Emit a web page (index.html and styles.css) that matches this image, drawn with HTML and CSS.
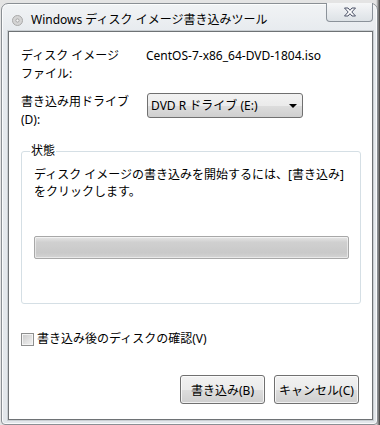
FILE: index.html
```html
<!DOCTYPE html>
<html lang="ja">
<head>
    <meta charset="UTF-8">
    <title>Windows ディスク イメージ書き込みツール</title>
    <link rel="stylesheet" href="styles.css">
</head>
<body>
    <div class="window">
        <div class="titlebar">
            <svg class="app-icon" width="11" height="11" viewBox="0 0 11 11">
                <circle cx="5.5" cy="5.5" r="5" fill="#d4d4d4" stroke="#a9a9a9"/>
                <circle cx="5.5" cy="5.5" r="1.6" fill="#f4f4f4" stroke="#9a9a9a" stroke-width="0.8"/>
            </svg>
            <span class="title">Windows ディスク イメージ書き込みツール</span>
            <div class="close-btn">
                <svg width="16" height="10" viewBox="0 0 16 10">
                    <path d="M2.5 1 H6 L8 3.3 L10 1 H13.5 L9.8 5 L13.5 9 H10 L8 6.7 L6 9 H2.5 L6.2 5 Z" fill="#fff" stroke="#4a5066" stroke-width="1"/>
                </svg>
            </div>
        </div>

        <div class="client">
            <div class="fields">
                <div class="label">ディスク イメージ<br>ファイル:</div>
                <div class="value">CentOS-7-x86_64-DVD-1804.iso</div>

                <div class="label">書き込み用ドライブ<br>(D):</div>
                <div class="value">
                    <div class="dropdown">
                        <span>DVD R ドライブ (E:)</span>
                        <span class="arrow"></span>
                    </div>
                </div>
            </div>

            <fieldset class="group">
                <legend>状態</legend>
                <p class="status">ディスク イメージの書き込みを開始するには、[書き込み]<br>をクリックします。</p>
                <div class="progress"></div>
            </fieldset>

            <label class="check">
                <span class="box"></span>
                書き込み後のディスクの確認(V)
            </label>

            <div class="buttons">
                <button>書き込み(B)</button>
                <button>キャンセル(C)</button>
            </div>
        </div>
    </div>
</body>
</html>
```

FILE: styles.css
```css
body {
    margin: 0;
    height: 425px;
    background: linear-gradient(90deg, #e4e4e4 0%, #e4e4e4 99%, #3a3a3a 100%);
    font-family: "Noto Sans", "Noto Sans CJK JP", sans-serif;
    font-size: 12px;
    color: #000;
    overflow: hidden;
}
.window {
    margin: 3px 2px 0 1px;
    height: 416px;
    border: 1px solid #8a8f94;
    border-radius: 7px 7px 4px 4px;
    background: linear-gradient(180deg, #f1f3f5 0%, #e6eaee 30px, #e3e7eb 100%);
    box-shadow: inset 0 0 0 1px rgba(255, 255, 255, 0.8);
    padding: 0 4px 4px 6px;
    display: flex;
    flex-direction: column;
}
.titlebar {
    height: 27px;
    display: flex;
    align-items: center;
    position: relative;
}
.app-icon {
    margin: 6px 0 0 4px;
}
.title {
    margin: 3px 0 0 8px;
    color: #000;
    font-size: 12px;
}
.close-btn {
    position: absolute;
    top: -1px;
    right: 0;
    width: 45px;
    height: 18px;
    border: 1px solid #8b929a;
    border-top: none;
    border-radius: 0 0 4px 4px;
    background: linear-gradient(180deg, #f6f7f8 0%, #e9ecef 50%, #dde2e6 100%);
    display: flex;
    align-items: center;
    justify-content: center;
}
.client {
    flex: 1;
    background: #fff;
    border: 1px solid #6e7275;
    box-shadow: 0 0 0 1px #c9ced2;
    padding: 15px 11px 15px 12px;
    display: flex;
    flex-direction: column;
}
.fields {
    display: grid;
    grid-template-columns: 125px auto;
    row-gap: 10px;
    line-height: 18px;
}
.dropdown {
    width: 156px;
    height: 25px;
    margin-left: 1px;
    border: 1px solid #707070;
    border-radius: 3px;
    background: linear-gradient(180deg, #f2f2f2 0%, #ebebeb 50%, #dddddd 51%, #cfcfcf 100%);
    display: flex;
    align-items: center;
    justify-content: space-between;
    padding: 0 5px 0 3px;
    box-sizing: border-box;
}
.arrow {
    width: 0;
    height: 0;
    border-left: 4px solid transparent;
    border-right: 4px solid transparent;
    border-top: 4px solid #000;
}
.group {
    margin: 13px 0 0 0;
    padding: 6px 11px 44px 12px;
    border: 1px solid #d5dfe5;
    border-radius: 3px;
    min-inline-size: 0;
}
.group legend {
    padding: 0 1px;
    margin-left: -4px;
    line-height: 18px;
}
.status {
    margin: 0;
    line-height: 17px;
}
.progress {
    margin-top: 36px;
    height: 21px;
    border: 1px solid #a8a8a8;
    border-radius: 2px;
    background: linear-gradient(180deg, #e6e6e6 0%, #d0d0d0 25%, #c9c9c9 75%, #d4d4d4 100%);
    box-shadow: inset 0 0 0 1px rgba(255, 255, 255, 0.5);
}
.check {
    margin-top: 27px;
    display: flex;
    align-items: center;
    gap: 3px;
    line-height: 16px;
}
.box {
    width: 11px;
    height: 11px;
    border: 1px solid #8e8f8f;
    background: linear-gradient(135deg, #c9c9c9 0%, #e3e3e3 60%, #f1f1f1 100%);
    box-shadow: inset 0 0 0 1px #f4f4f4;
}
.buttons {
    margin-top: auto;
    display: flex;
    justify-content: flex-end;
    gap: 9px;
    padding-right: 2px;
}
button {
    width: 85px;
    height: 29px;
    font-family: inherit;
    font-size: 12px;
    color: #000;
    border: 1px solid #707070;
    border-radius: 3px;
    background: linear-gradient(180deg, #f2f2f2 0%, #ebebeb 50%, #dddddd 51%, #cfcfcf 100%);
    box-shadow: inset 0 0 0 1px rgba(255, 255, 255, 0.7);
    padding: 0;
}
```
